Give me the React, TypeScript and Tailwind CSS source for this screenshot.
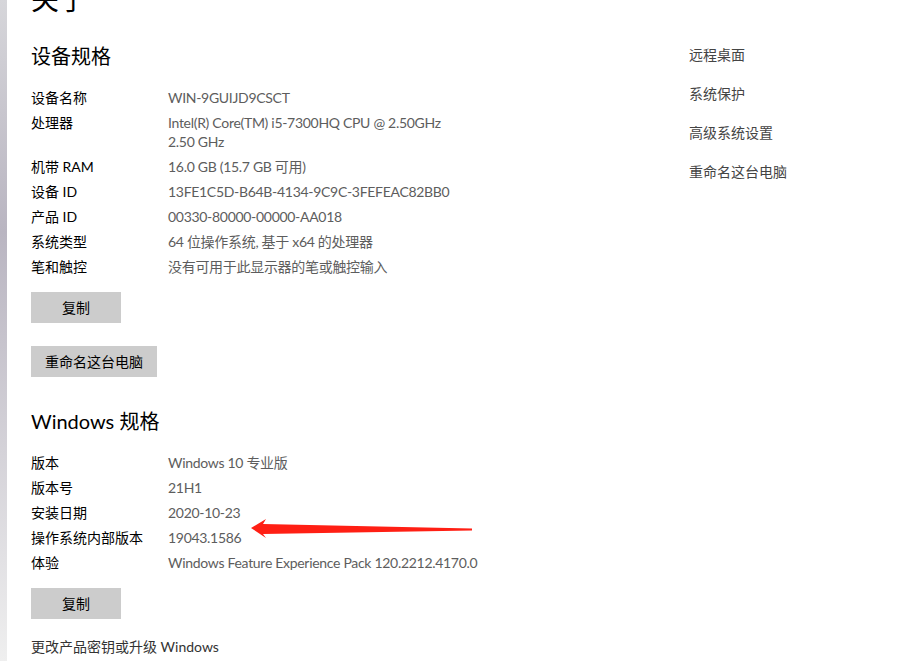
import React from 'react';

const deviceSpecs: { label: string; value: string[] }[] = [
  { label: '设备名称', value: ['WIN-9GUIJD9CSCT'] },
  { label: '处理器', value: ['Intel(R) Core(TM) i5-7300HQ CPU @ 2.50GHz', '2.50 GHz'] },
  { label: '机带 RAM', value: ['16.0 GB (15.7 GB 可用)'] },
  { label: '设备 ID', value: ['13FE1C5D-B64B-4134-9C9C-3FEFEAC82BB0'] },
  { label: '产品 ID', value: ['00330-80000-00000-AA018'] },
  { label: '系统类型', value: ['64 位操作系统, 基于 x64 的处理器'] },
  { label: '笔和触控', value: ['没有可用于此显示器的笔或触控输入'] },
];

const windowsSpecs: { label: string; value: string[] }[] = [
  { label: '版本', value: ['Windows 10 专业版'] },
  { label: '版本号', value: ['21H1'] },
  { label: '安装日期', value: ['2020-10-23'] },
  { label: '操作系统内部版本', value: ['19043.1586'] },
  { label: '体验', value: ['Windows Feature Experience Pack 120.2212.4170.0'] },
];

const related = ['远程桌面', '系统保护', '高级系统设置', '重命名这台电脑'];

const SpecList = ({ rows }: { rows: { label: string; value: string[] }[] }) => (
  <div className="mt-[18px] flex flex-col gap-[6px] text-[14px] leading-[19px]">
    {rows.map((row) => (
      <div key={row.label} className="flex">
        <div className="w-[137px] shrink-0 text-black">{row.label}</div>
        <div className="text-[#5d5d5d] tracking-[-0.3px]">
          {row.value.map((line) => (
            <div key={line}>{line}</div>
          ))}
        </div>
      </div>
    ))}
  </div>
);

const GrayButton = ({ children, className = '' }: { children: React.ReactNode; className?: string }) => (
  <button className={`h-[31px] bg-[#cccccc] text-[14px] text-black flex items-center justify-center ${className}`}>
    {children}
  </button>
);

export default function App() {
  return (
    <div className="relative w-[915px] h-[661px] overflow-hidden bg-white flex font-['Lato','Noto_Sans_CJK_SC',sans-serif]">
      {/* blurred window edge */}
      <div className="w-[7px] shrink-0 bg-linear-to-b from-[#d6d6da] via-[#b9b5c1] via-35% to-[#efefef]" />

      <div className="flex-1 flex">
        {/* main column */}
        <div className="w-[682px] shrink-0 pl-[24px]">
          <h1 className="-mt-[19px] text-[28px] leading-[36px] text-black">关于</h1>

          <h2 className="mt-[25px] text-[20px] leading-[28px] text-black">设备规格</h2>
          <SpecList rows={deviceSpecs} />
          <GrayButton className="mt-[16px] w-[90px]">复制</GrayButton>
          <GrayButton className="mt-[23px] px-[14px]">重命名这台电脑</GrayButton>

          <h2 className="mt-[30px] text-[20px] leading-[28px] text-black">Windows 规格</h2>
          <SpecList rows={windowsSpecs} />
          <GrayButton className="mt-[16px] w-[90px]">复制</GrayButton>

          <div className="mt-[18px] text-[14px] leading-[19px] text-[#333333]">更改产品密钥或升级 Windows</div>
        </div>

        {/* related settings */}
        <div className="pt-[45px] flex flex-col gap-[20px] text-[14px] leading-[19px] text-[#444444]">
          {related.map((item) => (
            <div key={item}>{item}</div>
          ))}
        </div>
      </div>

      {/* annotation arrow */}
      <svg className="absolute left-[249px] top-[516px]" width="226" height="24" viewBox="0 0 226 24">
        <path d="M2 12 L17 3 L14 8 L223 12.5 L223 14.5 L14 18 L17 22 Z" fill="#ff1f14" />
      </svg>
    </div>
  );
}
